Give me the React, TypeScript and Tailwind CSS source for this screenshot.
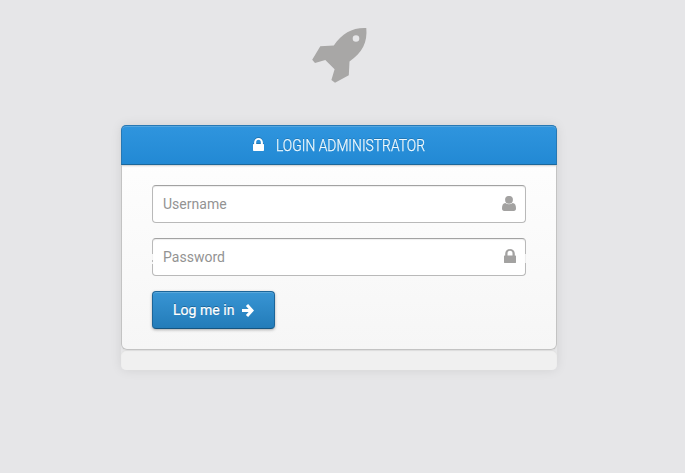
import React from "react";

function Rocket() {
  return (
    <svg className="block h-[56px] w-[56px]" viewBox="0 0 56 56" fill="#a8a7a6">
      <path
        fillRule="evenodd"
        d="M54.3 1C55.6 15 50.5 25.5 37.5 34.5L36.8 48.2L23 55.8L19.4 53L22.6 42.3L13.3 33L3 36L0.2 32.8L8.3 19.2L21.8 18.4C30.5 6 40.5 0.4 54.3 1ZM44 8.2A3.3 3.3 0 1 0 44 14.8A3.3 3.3 0 0 0 44 8.2Z"
      />
    </svg>
  );
}

function Lock({ className }: { className: string }) {
  return (
    <svg className={className} viewBox="0 0 12 15" fill="currentColor" preserveAspectRatio="none">
      <path
        fillRule="evenodd"
        d="M1.200 7V5a4.800 5 0 0 1 9.600 0v2h.6q.6 0 .6.9v6.200q0 .9-.9.9H.9q-.9 0-.9-.9V7.900q0-.9.6-.9ZM3.500 7h5V5a2.500 3 0 0 0-5 0Z"
      />
    </svg>
  );
}

function User() {
  return (
    <svg className="h-[15px] w-[14px]" viewBox="0 0 14 15" fill="currentColor">
      <circle cx="7" cy="3.8" r="3.9" />
      <path d="M3.300 7C1 7 0 9.300 0 12.300Q0 15 2.200 15h9.600Q14 15 14 12.300C14 9.300 13 7 10.700 7Q9 8.200 7 8.200T3.300 7Z" />
    </svg>
  );
}

function Arrow() {
  return (
    <svg className="h-[13px] w-[12px]" viewBox="0 0 12 13" fill="none" stroke="#fff">
      <path strokeWidth="3" d="M0 6.500h10M5 1l5 5.500L5 12" />
    </svg>
  );
}

function Field({ label, icon }: { label: string; icon: React.ReactNode }) {
  return (
    <div className="flex h-[38px] items-center justify-between rounded border border-[#b9b9b9] border-t-[#a2a2a2] bg-white pr-[9px] pl-[10px] text-[#939393] shadow-[inset_0_1px_1px_#eeeeee]">
      <span className="text-[14px] leading-5 tracking-[0.02px]">{label}</span>
      <span className="flex pb-[2px] text-[#a3a2a1]">{icon}</span>
    </div>
  );
}

export default function App() {
  return (
    <main className="flex h-[473px] w-[685px] flex-col bg-[#e6e6e8] pt-[27px] font-[Roboto,sans-serif]">
      <div className="ml-[312px] h-[98px]">
        <Rocket />
      </div>
      <section className="ml-[121px] w-[436px] rounded-[5px] shadow-[0_0_12px_rgba(0,0,0,0.09)]">
        <div className="h-[225px] rounded-[6px] bg-linear-to-b from-white to-[#f6f6f6] shadow-[inset_0_0_0_1px_#c3c3c3,0_1px_1px_#dedede]">
          <header className="flex h-10 items-center rounded-t-[5px] border border-[#2678b4] border-b-[#1d6799] bg-linear-to-b from-[#2f95de] to-[#2289d4] pl-[131px] text-white shadow-[inset_0_1px_0_#55a6df,0_1px_2px_#cccccc]">
            <Lock className="mb-px h-[13px] w-[11px] drop-shadow-[0_-1px_0_#2377b3]" />
            <h1 className="ml-3 origin-left scale-x-[0.815] text-[17px] leading-6 font-light whitespace-nowrap text-[#effaff] [-webkit-text-stroke:0.25px_#effaff] [text-shadow:0_-1px_0_#2377b3]">
              LOGIN ADMINISTRATOR
            </h1>
          </header>
          <form className="flex flex-col gap-[15px] px-[31px] pt-5">
            <Field label="Username" icon={<User />} />
            <div className="relative">
              <Field label="Password" icon={<Lock className="h-[14px] w-[12px]" />} />
              <i className="absolute top-4 left-0 h-[6px] w-px bg-[#f4f4f4]" />
              <i className="absolute top-6 left-0 h-[2px] w-px bg-[#f4f4f4]" />
              <i className="absolute top-4 right-0 h-[9px] w-px bg-[#ededed]" />
            </div>
            <button
              type="button"
              className="flex h-[38px] w-[123px] items-center rounded border border-[#1c6599] border-b-[#15547f] bg-linear-to-b from-[#3895d4] to-[#237cb9] pl-5 text-[14px] text-white shadow-[inset_0_1px_0_#5ba8da,0_1px_3px_#aaaaaa] [text-shadow:0_-1px_0_#1c6599]"
            >
              <span className="w-[69px] text-left tracking-[0.04px] whitespace-nowrap [-webkit-text-stroke:0.2px_#fff]">Log me in</span>
              <Arrow />
            </button>
          </form>
        </div>
        <footer className="h-5 rounded-[5px] bg-[#f0f0f0] shadow-[inset_0_1px_1px_#dcdcdc]" />
      </section>
    </main>
  );
}
